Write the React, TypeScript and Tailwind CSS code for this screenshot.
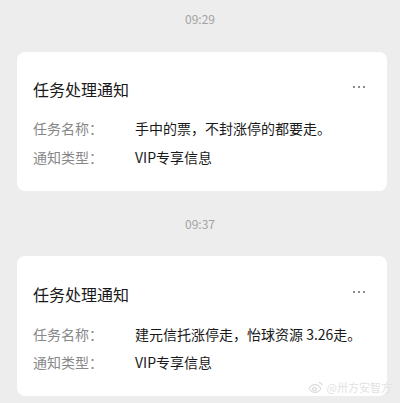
import React from 'react';

interface Notice {
  time: string;
  task: string;
  kind: string;
  pt: string;
  gap: string;
  rowGap: string;
  pb: string;
}

const notices: Notice[] = [
  { time: '09:29', task: '手中的票，不封涨停的都要走。', kind: 'VIP专享信息', pt: 'pt-[26px]', gap: 'mt-[18px]', rowGap: 'gap-[9px]', pb: 'pb-[24px]' },
  { time: '09:37', task: '建元信托涨停走，怡球资源 3.26走。', kind: 'VIP专享信息', pt: 'pt-[27px]', gap: 'mt-[19px]', rowGap: 'gap-[8px]', pb: 'pb-[24px]' }
];

const NoticeCard: React.FC<{ n: Notice }> = ({ n }) => {
  return (
    <div className={`ml-[17px] w-[370px] rounded-[8px] bg-white pl-[16px] pr-[22px] ${n.pt} ${n.pb}`}>
      <div className="flex items-center justify-between">
        <div className="text-[16px] leading-[22px] text-[#191919]">任务处理通知</div>
        <div className="flex gap-[3px] pb-[4px]">
          <span className="block h-[2px] w-[2px] bg-[#8c8c8c]" />
          <span className="block h-[2px] w-[2px] bg-[#8c8c8c]" />
          <span className="block h-[2px] w-[2px] bg-[#8c8c8c]" />
        </div>
      </div>
      <div className={`${n.gap} flex flex-col ${n.rowGap} text-[14px] leading-[20px]`}>
        <div className="flex">
          <span className="w-[102px] text-[#888888]">任务名称：</span>
          <span className="text-[#191919]">{n.task}</span>
        </div>
        <div className="flex">
          <span className="w-[102px] text-[#888888]">通知类型：</span>
          <span className="text-[#191919]">{n.kind}</span>
        </div>
      </div>
    </div>
  );
};

export default function App() {
  return (
    <div
      className="relative h-[403px] w-[400px] overflow-hidden bg-[#ededed]"
      style={{ fontFamily: '"Noto Sans CJK SC", "Noto Sans", sans-serif' }}
    >
      <div className="pt-[11px] text-center text-[12px] leading-[16px] text-[#a3a3a3]">{notices[0].time}</div>
      <div className="mt-[25px]">
        <NoticeCard n={notices[0]} />
      </div>
      <div className="mt-[25px] text-center text-[12px] leading-[16px] text-[#a3a3a3]">{notices[1].time}</div>
      <div className="mt-[24px]">
        <NoticeCard n={notices[1]} />
      </div>
      {/* faint watermark */}
      <div className="absolute bottom-[10px] right-[8px] flex items-center gap-[4px] text-[11px] leading-[12px] text-[#e2e2e2]">
        <svg width="14" height="12" viewBox="0 0 14 12" fill="none" stroke="#cfcfcf" strokeWidth="1">
          <ellipse cx="6" cy="7.5" rx="5.5" ry="3.8" />
          <ellipse cx="5.5" cy="8" rx="2" ry="1.5" />
          <path d="M10 1.5a3 3 0 0 1 3 3" />
        </svg>
        <span>@卅方安智方</span>
      </div>
    </div>
  );
}
